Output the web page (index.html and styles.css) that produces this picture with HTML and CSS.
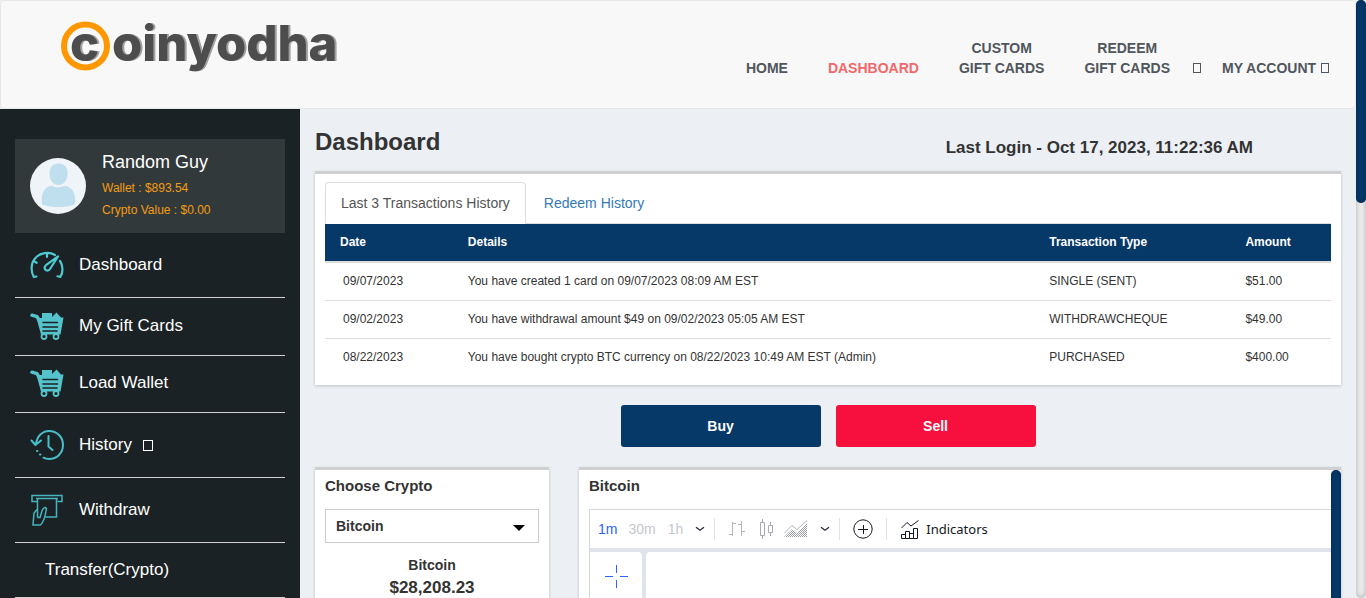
FILE: index.html
```html
<!DOCTYPE html>
<html lang="en">
<head>
<meta charset="utf-8">
<title>Coinyodha - Dashboard</title>
<link rel="stylesheet" href="styles.css">
</head>
<body>
<svg class="defs" aria-hidden="true">
  <symbol id="cart" viewBox="0 0 34 28">
    <path d="M2 3.200 7 4.700 9 8" fill="none" stroke="currentColor" stroke-width="3.400" stroke-linecap="round" stroke-linejoin="round"/>
    <path d="M6.500 6H12V1h10v4l4.500-4.500L31 5.500h2.500L30.500 22.500H11z" fill="currentColor"/>
    <path d="M13 10.500h14.500M13 15h14.500M13 19h14" stroke="#1b2225" stroke-width="1.600" stroke-linecap="round"/>
    <circle cx="14" cy="24.500" r="2.500" fill="#1b2225" stroke="currentColor" stroke-width="1.800"/>
    <circle cx="26" cy="24.500" r="2.500" fill="#1b2225" stroke="currentColor" stroke-width="1.800"/>
  </symbol>
</svg>
<div class="window">
<div class="page">
  <header class="topbar">
    <a class="logo" href="#" aria-label="Coinyodha">
      <svg width="290" height="62" viewBox="0 0 290 62">
        <circle cx="30.500" cy="32" r="21.500" fill="none" stroke="#ff9800" stroke-width="6"/>
        <g class="logo-shade"><text x="17" y="47">c</text><text x="59" y="47">oinyodha</text></g>
        <g class="logo-text"><text x="15" y="47">c</text><text x="57" y="47">oinyodha</text></g>
      </svg>
    </a>
    <nav class="nav">
      <a href="#">HOME</a>
      <a class="active" href="#">DASHBOARD</a>
      <a href="#">CUSTOM<br>GIFT CARDS</a>
      <a class="redeem" href="#">REDEEM<br>GIFT CARDS</a>
      <a class="bell" href="#" aria-label="Notifications"><span class="box"></span></a>
      <a href="#">MY ACCOUNT <span class="box"></span></a>
    </nav>
  </header>
  <div class="body">
    <aside class="sidebar">
      <div class="profile">
        <svg class="avatar" viewBox="0 0 56 56">
          <circle cx="28" cy="28" r="28" fill="#eff4f8"/>
          <path d="M28.500 5.500c6 0 9 4 9 10 0 7-4 11.500-9 11.500s-9-4.500-9-11.500c0-6 3-10 9-10z" fill="#bfdeee"/>
          <path d="M12 46c-1-9 1-16 8-18 3-.6 4 1.500 8 1.500s5-2.100 8-1.500c7 1.500 10 9 9 18-5 4-28 4-33 0z" fill="#bfdeee"/>
        </svg>
        <div class="who">
          <div class="name">Random Guy</div>
          <div class="money">Wallet : $893.54</div>
          <div class="money">Crypto Value : $0.00</div>
        </div>
      </div>
      <nav class="menu">
        <a class="tall" href="#">
          <svg width="34" height="28" viewBox="0 0 34 28" fill="none" stroke="#4dc9d2" stroke-width="2.200" stroke-linecap="round" stroke-linejoin="round">
            <path d="M6.500 25.500 3.800 26C.5 20 1 12 5 7.500 10 1.500 19 .5 25 4M30 10c3.500 5 3 12 .3 16l-2.800-.7M17 2v4M4.500 10.500l2.200 1.300M28 5.500 20 18c-2 3-6.500 1-5-2.500.5-1 1-1.500 2-2.200z"/>
          </svg>
          Dashboard</a>
        <a class="mid" href="#"><svg class="cart" width="34" height="28"><use href="#cart"/></svg>My Gift Cards</a>
        <a class="short" href="#"><svg class="cart" width="34" height="28"><use href="#cart"/></svg>Load Wallet</a>
        <a class="tall" href="#">
          <svg width="34" height="32" viewBox="0 0 34 32" fill="none" stroke="#46bfc9" stroke-width="2" stroke-linecap="round" stroke-linejoin="round">
            <path d="M6 15C7 7 12.500 2 19 2c8 0 14 6.200 14 14s-6 14-14 14c-2 0-4-.5-5.500-1.300M1.500 11.500 5.500 16 11 11.500M18.500 7v10.500l4 3.500M7 22h.4M10 25.500h.4"/>
          </svg>
          History <span class="box big"></span></a>
        <a class="tall" href="#">
          <svg width="34" height="32" viewBox="0 0 34 32" fill="none" stroke="#46b4bc" stroke-width="1.500">
            <path d="M7 7.500H2V1.500h30v6h-4.500M6 4.500h22M7.500 5v18.500M26.500 5v18H15.500M16.500 14c-2-1-3.500 0-4.500 3l-2 6.500H7.500M7 15.500l-3 3.500-1 12h7.500c4-3.500 5-9.500 6-17"/>
          </svg>
          Withdraw</a>
        <a class="plain" href="#">Transfer(Crypto)</a>
      </nav>
    </aside>
    <main class="main">
      <div class="heading">
        <h1>Dashboard</h1>
        <p>Last Login - Oct 17, 2023, 11:22:36 AM</p>
      </div>
      <section class="card">
        <div class="tabs" role="tablist">
          <button class="tab selected" role="tab" aria-selected="true">Last 3 Transactions History</button>
          <button class="tab" role="tab" aria-selected="false">Redeem History</button>
        </div>
        <table>
          <thead><tr><th class="c-date">Date</th><th class="c-details">Details</th><th class="c-type">Transaction Type</th><th>Amount</th></tr></thead>
          <tbody>
            <tr><td>09/07/2023</td><td>You have created 1 card on 09/07/2023 08:09 AM EST</td><td>SINGLE (SENT)</td><td>$51.00</td></tr>
            <tr><td>09/02/2023</td><td>You have withdrawal amount $49 on 09/02/2023 05:05 AM EST</td><td>WITHDRAWCHEQUE</td><td>$49.00</td></tr>
            <tr><td>08/22/2023</td><td>You have bought crypto BTC currency on 08/22/2023 10:49 AM EST (Admin)</td><td>PURCHASED</td><td>$400.00</td></tr>
          </tbody>
        </table>
      </section>
      <div class="actions">
        <button class="buy">Buy</button>
        <button class="sell">Sell</button>
      </div>
      <div class="panels">
        <section class="panel choose">
          <h2><label for="coin">Choose Crypto</label></h2>
          <div class="select">
            <select id="coin"><option>Bitcoin</option></select>
            <svg width="12" height="6" viewBox="0 0 12 6"><path d="M0 0h12L6 6z" fill="#000"/></svg>
          </div>
          <div class="coin">Bitcoin</div>
          <div class="price">$28,208.23</div>
        </section>
        <section class="panel chart">
          <div class="chart-body">
            <h2>Bitcoin</h2>
            <div class="widget">
              <div class="toolbar">
                <button class="range on">1m</button>
                <button class="range">30m</button>
                <button class="range">1h</button>
                <button class="chev" aria-label="More intervals"><svg width="10" height="6" viewBox="0 0 10 6"><path d="M1 1.200 5 4.200 9 1.200" fill="none" stroke="#2a2e39" stroke-width="1.300"/></svg></button>
                <span class="sep"></span>
                <button class="bars" aria-label="Bars"><svg width="16" height="18" viewBox="0 0 16 18" fill="none" stroke="#b2b5be"><path d="M3.500 2v14M0 14.500h3.500M3.500 3.500H7M12.500 1v15M9 4.500h3.500M12.500 11.500H16"/></svg></button>
                <button class="candles" aria-label="Candles"><svg width="14" height="20" viewBox="0 0 14 20" fill="none" stroke="#a6a9b2"><path d="M1.500 3.500h4v13h-4zM3.500 0v3.500M3.500 16.500V20M9.500 6.500h4v7h-4zM11.500 3v3.500M11.500 13.500V17"/></svg></button>
                <button class="area" aria-label="Area"><svg width="24" height="18" viewBox="0 0 24 18">
                  <defs><pattern id="dots" width="2" height="2" patternUnits="userSpaceOnUse"><path d="M0 0h1v1H0zM1 1h1v1H1z" fill="#9a9da6"/></pattern></defs>
                  <path d="M0 17 8 9l5 4L23 3v14z" fill="url(#dots)"/><path d="M.5 13 8 5.500l5 4L23 .5" fill="none" stroke="#b2b5be"/></svg></button>
                <button class="chev" aria-label="More styles"><svg width="10" height="6" viewBox="0 0 10 6"><path d="M1 1.200 5 4.200 9 1.200" fill="none" stroke="#2a2e39" stroke-width="1.300"/></svg></button>
                <span class="sep"></span>
                <button class="plus" aria-label="Compare"><svg width="20" height="20" viewBox="0 0 20 20" fill="none" stroke="#131722"><circle cx="10" cy="10" r="9.200"/><path d="M5 10.500h10M10.500 6v9"/></svg></button>
                <span class="sep"></span>
                <button class="indicators"><svg width="18" height="19" viewBox="0 0 18 19" fill="none" stroke="#131722"><path d="M.5 8 6 2.500l4 3.500L17.500.5M.5 18.500v-4h4v4zM4.500 18.500v-7h4v7zM8.500 18.500v-5h4v5zM12.500 18.500v-10h4v10z"/></svg>Indicators</button>
              </div>
              <div class="stage">
                <div class="tools"><button aria-label="Cross"><svg width="24" height="24" viewBox="0 0 24 24" stroke="#2962ff"><path d="M0 12.500h8M15 12.500h8M11.500 1v8M11.500 16v8"/></svg></button></div>
                <div class="plot"></div>
              </div>
            </div>
          </div>
          <div class="thumb inner"></div>
        </section>
      </div>
    </main>
  </div>
</div>
<div class="track"><div class="thumb"></div></div>
</div>
</body>
</html>
```

FILE: styles.css
```css
* { box-sizing: border-box; }
body { margin: 0; font: 14px/20px "Liberation Sans", Arial, sans-serif; color: #333; background: #ecf0f5; }
a { color: inherit; text-decoration: none; }
button { font: inherit; color: inherit; background: none; border: 0; padding: 0; cursor: pointer; }
svg { display: block; flex: none; }
h1, h2, p { margin: 0; }
.defs { position: absolute; width: 0; height: 0; }

.window { display: flex; height: 100vh; overflow: hidden; }
.page { flex: 1; min-width: 0; display: flex; flex-direction: column; overflow: hidden; }
.track { width: 10px; flex: none; background: #ececec; border-radius: 5px; box-shadow: inset 0 0 5px #aaa; }
.thumb { width: 10px; height: 34%; background: #063868; border-radius: 5px; box-shadow: inset 0 0 4px #032850; }

.topbar { flex: none; display: flex; justify-content: space-between; height: 109px; background: #f8f8f8; border: 1px solid #e7e7e7; border-radius: 4px; }
.logo { padding: 13px 0 0 54px; }
.logo text { font: 800 49px Inter, "Open Sans", sans-serif; }
.logo-shade { fill: #a0a0a0; }
.logo-text { fill: #4d4d4d; }
.nav { display: flex; align-items: flex-end; gap: 40px; padding: 0 26px 30px 0; font-weight: bold; text-align: center; color: #50565b; white-space: nowrap; }
.nav .active { color: #f0686a; }
.nav .redeem { margin-right: -18px; }
.nav .bell { margin-right: -19px; }
.box { display: inline-block; width: 8px; height: 10px; border: 1px solid currentColor; }
.nav .box { margin-left: 1px; }
.box.big { width: 10px; height: 11px; margin-left: -4px; }

.body { flex: 1; display: flex; min-height: 0; }
.sidebar { width: 300px; flex: none; padding: 30px 15px 0; background: #1b2225; color: #fff; overflow: hidden; }
.profile { display: flex; align-items: center; gap: 16px; height: 94px; padding: 0 15px; background: #32393b; }
.avatar { width: 56px; height: 56px; }
.who { padding-bottom: 2px; }
.name { font-size: 18px; line-height: 24px; margin-bottom: 3px; }
.money { font-size: 12px; line-height: 22px; color: #f39c12; }
.menu a { display: flex; align-items: center; gap: 15px; padding-left: 15px; border-bottom: 1px solid #d2d2d2; font-size: 17px; }
.menu .tall { height: 65px; }
.menu .mid { height: 58px; padding-bottom: 2px; }
.menu .short { height: 57px; padding-bottom: 2px; }
.menu .plain { height: 55px; padding-left: 30px; }
.cart { color: #55c3cb; }

.main { flex: 1; min-width: 0; padding: 15px; overflow: hidden; }
.heading { display: flex; justify-content: space-between; height: 47px; padding-right: 88px; font-weight: bold; }
h1 { font-size: 24px; line-height: 36px; }
.heading p { font-size: 17px; line-height: 48px; }
.card, .panel { background: #fff; border-top: 3px solid #d0d0d0; box-shadow: 0 1px 3px rgba(0, 0, 0, .2); }
.card { padding: 8px 10px; }
.tabs { display: flex; gap: 2px; height: 42px; border-bottom: 1px solid #ddd; }
.tab { height: 42px; padding: 0 15px; border: 1px solid transparent; border-radius: 4px 4px 0 0; color: #337ab7; }
.tab.selected { color: #555; background: #fff; border-color: #ddd #ddd #fff; }
table { width: 100%; border-collapse: separate; border-spacing: 0; table-layout: fixed; font-size: 12px; line-height: 17px; }
th { height: 39px; padding: 0 8px 1px; text-align: left; color: #fff; background: #063868; border-bottom: 2px solid #ddd; }
td { height: 38px; padding: 0 8px; border-bottom: 1px solid #ddd; }
tr:last-child td { border-bottom-color: transparent; }
th:first-child { padding-left: 15px; }
td:first-child { padding-left: 18px; }
.c-date { width: 13.4%; }
.c-details { width: 57.8%; }
.c-type { width: 19.5%; }

.actions { display: flex; justify-content: center; gap: 15px; padding: 20px 0; }
.actions button { width: 200px; height: 42px; border-radius: 3px; color: #fff; font-weight: bold; }
.buy { background: #063868; }
.sell { background: #f70f3d; }

.panels { display: grid; grid-template-columns: 234px 1fr; gap: 30px; height: 400px; }
h2 { font-size: 15px; line-height: 32px; margin-bottom: 7px; }
.choose { padding: 0 10px; text-align: center; font-weight: bold; }
.choose h2 { text-align: left; }
.select { display: grid; align-items: center; margin-bottom: 12px; }
.select select { grid-area: 1 / 1; width: 100%; height: 34px; padding: 0 10px; appearance: none; border: 1px solid #ccc; border-radius: 0; background: #fff; color: #333; font: bold 14px "Liberation Sans", Arial, sans-serif; }
.select svg { grid-area: 1 / 1; justify-self: end; margin: 4px 14px 0 0; pointer-events: none; }
.price { font-size: 17px; line-height: 25px; }
.chart { display: flex; }
.chart-body { flex: 1; min-width: 0; padding-left: 10px; display: flex; flex-direction: column; }
.thumb.inner { height: 100%; }
.widget { flex: 1; display: flex; flex-direction: column; border: 1px solid #d6d7da; border-right: 0; background: #e0e3eb; }
.toolbar { display: flex; align-items: center; height: 38px; padding-left: 8px; background: #fff; }
.range { margin-right: 12px; color: #c5c7cd; }
.range.on { margin-right: 11px; color: #2962ff; }
.sep { width: 1px; height: 22px; background: #e0e3eb; }
.chev { margin-right: 9px; }
.bars { margin: 0 14px; }
.area { margin: 0 12px 0 11px; }
.plus { margin: 0 13px; }
.indicators { display: flex; align-items: center; gap: 7px; margin-left: 14px; color: #131722; font: 13px/18px "Noto Sans", sans-serif; }
.stage { flex: 1; display: flex; gap: 4px; margin-top: 4px; }
.tools { width: 52px; padding: 12px 15px; background: #fff; border-radius: 0 4px 0 0; }
.plot { flex: 1; background: #fff; border-radius: 4px 0 0 0; }
```
